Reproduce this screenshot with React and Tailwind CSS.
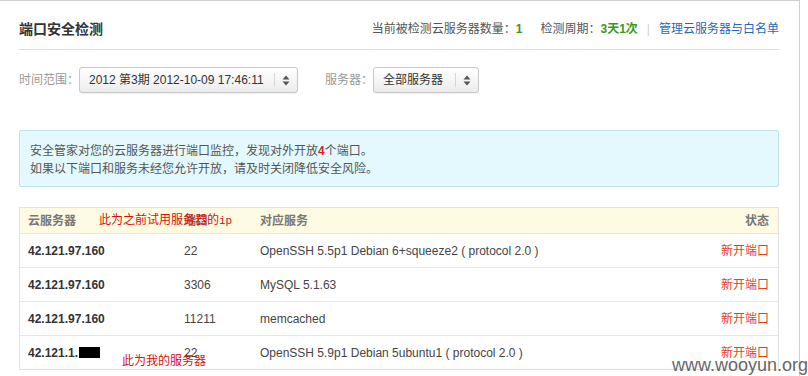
import React from 'react';

const rows = [
  { ip: '42.121.97.160', port: '22', service: 'OpenSSH 5.5p1 Debian 6+squeeze2 ( protocol 2.0 )' },
  { ip: '42.121.97.160', port: '3306', service: 'MySQL 5.1.63' },
  { ip: '42.121.97.160', port: '11211', service: 'memcached' },
  { ip: '42.121.1.', port: '22', service: 'OpenSSH 5.9p1 Debian 5ubuntu1 ( protocol 2.0 )', masked: true },
];

const SortArrows = () => (
  <svg width="8" height="11" viewBox="0 0 8 11" className="text-[#555]">
    <path d="M4 0.5 L7.5 4.5 L0.5 4.5 Z" fill="currentColor" />
    <path d="M4 10.5 L7.5 6.5 L0.5 6.5 Z" fill="currentColor" />
  </svg>
);

const FakeSelect = ({ value, textW }) => (
  <div className="flex h-[26px] items-center rounded-[3px] border border-[#c8c8c8] bg-gradient-to-b from-white to-[#ececec] shadow-[0_1px_1px_rgba(0,0,0,0.06)]">
    <div className={`${textW} whitespace-nowrap pl-[9px] text-[#333] leading-[24px]`}>{value}</div>
    <div className="h-[14px] w-px bg-[#d6d6d6]" />
    <div className="flex w-[22px] items-center justify-center">
      <SortArrows />
    </div>
  </div>
);

export default function App() {
  return (
    <div
      className="relative min-h-[376px] w-[800px] border-t border-r border-[#cfcfcf] bg-white pl-[19px] pr-[20px] text-[12px]"
      style={{ fontFamily: '"Liberation Sans", Arial, "Noto Sans CJK SC", sans-serif' }}
    >
      {/* header */}
      <div className="flex h-[49px] items-center justify-between border-b border-[#dcdcdc] pt-[8px]">
        <div className="text-[14px] font-bold text-[#333]">端口安全检测</div>
        <div className="flex items-center text-[#555]">
          <span>当前被检测云服务器数量：</span>
          <span className="font-bold text-[#3a9a18]">1</span>
          <span className="ml-[18px]">检测周期：</span>
          <span className="font-bold text-[#3a9a18]">3天1次</span>
          <span className="mx-[9px] text-[#d0d0d0]">|</span>
          <span className="text-[#1f6ab8]">管理云服务器与白名单</span>
        </div>
      </div>

      {/* filters */}
      <div className="mt-[17px] flex items-center">
        <span className="text-[#999]">时间范围：</span>
        <FakeSelect value="2012 第3期 2012-10-09 17:46:11" textW="w-[194px]" />
        <span className="ml-[27px] text-[#999]">服务器：</span>
        <FakeSelect value="全部服务器" textW="w-[81px]" />
      </div>

      {/* notice */}
      <div className="mt-[37px] rounded-[2px] border border-[#c3e0e8] bg-[#e4f9fd] pt-[11px] pb-[8px] pl-[10px] leading-[18px] text-[#555]">
        <div>
          安全管家对您的云服务器进行端口监控，发现对外开放<span className="font-bold text-[#e02020]">4</span>个端口。
        </div>
        <div>如果以下端口和服务未经您允许开放，请及时关闭降低安全风险。</div>
      </div>

      {/* table */}
      <div className="relative mt-[20px] border border-[#e2e2e2]">
        <div className="flex h-[25px] items-center bg-[#fffbe3] pl-[8px] pr-[9px] font-bold text-[#777]">
          <div className="w-[156px]">云服务器</div>
          <div className="w-[76px]">端口</div>
          <div className="flex-1">对应服务</div>
          <div>状态</div>
        </div>
        {rows.map((r, i) => (
          <div key={i} className="flex h-[34px] items-center border-t border-[#e6e6e6] pl-[8px] pr-[9px] text-[#333]">
            <div className="flex w-[156px] items-center font-bold">
              {r.ip}
              {r.masked && <span className="ml-[1px] inline-block h-[11px] w-[21px] bg-black" />}
            </div>
            <div className="w-[76px] text-[#444]">{r.port}</div>
            <div className="flex-1 text-[#444]">{r.service}</div>
            <div className="text-[#e5401d]">新开端口</div>
          </div>
        ))}

        {/* red annotations drawn over the screenshot */}
        <div className="absolute left-[79px] top-[2px] text-[12px] text-[#d81010]" style={{ fontFamily: '"Noto Sans CJK SC", sans-serif' }}>
          此为之前试用服务器的<span className="text-[11px]" style={{ fontFamily: '"Liberation Mono", monospace' }}>ip</span>
        </div>
        <div className="absolute left-[102px] top-[143px] text-[12px] text-[#d81010]" style={{ fontFamily: '"Noto Sans CJK SC", sans-serif' }}>
          此为我的服务器
        </div>
      </div>

      <div className="absolute left-[672px] top-[351px] text-[18px] text-[#666]">www.wooyun.org</div>
    </div>
  );
}
